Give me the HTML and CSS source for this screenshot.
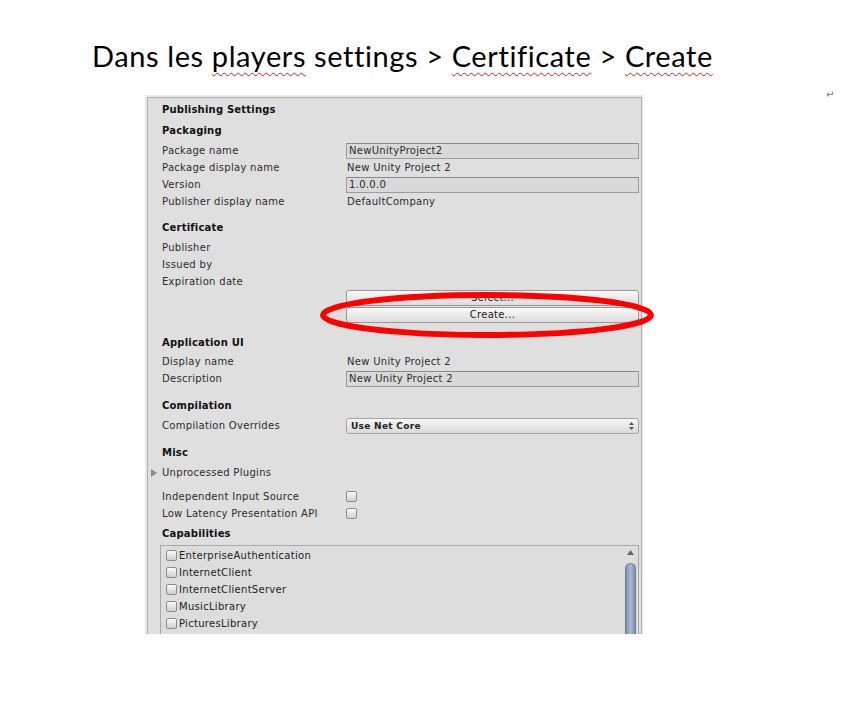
FILE: index.html
```html
<!DOCTYPE html>
<html lang="fr">
<head>
<meta charset="utf-8">
<link rel="stylesheet" href="styles.css">
</head>
<body>
<div class="page">
  <h1 class="title">Dans les <span class="sp">players</span> settings &gt; <span class="sp">Certificate</span> &gt; <span class="sp">Create</span></h1>
  <div class="figure-row">
    <div class="panel">
      <div class="inner">
        <div class="hdr h-top">Publishing Settings</div>
        <div class="hdr h-pack">Packaging</div>
        <div class="rows r-first">
          <div class="row"><span class="label">Package name</span><span class="field">NewUnityProject2</span></div>
          <div class="row"><span class="label">Package display name</span><span class="val">New Unity Project 2</span></div>
          <div class="row"><span class="label">Version</span><span class="field">1.0.0.0</span></div>
          <div class="row"><span class="label">Publisher display name</span><span class="val">DefaultCompany</span></div>
        </div>
        <div class="hdr h-cert">Certificate</div>
        <div class="rows r-first">
          <div class="row"><span class="label">Publisher</span></div>
          <div class="row"><span class="label">Issued by</span></div>
          <div class="row"><span class="label">Expiration date</span></div>
        </div>
        <div class="btn-row"><span class="label"></span><span class="btn">Select...</span></div>
        <div class="btn-row b2"><span class="label"></span>
          <span class="btn">Create...</span>
          <svg class="ellipse" width="340" height="52" viewBox="0 0 340 52"><ellipse cx="169" cy="26" rx="164" ry="20" fill="none" stroke="#ff0000" stroke-width="6"/></svg>
        </div>
        <div class="hdr h-app">Application UI</div>
        <div class="rows r-app">
          <div class="row"><span class="label">Display name</span><span class="val">New Unity Project 2</span></div>
          <div class="row"><span class="label">Description</span><span class="field">New Unity Project 2</span></div>
        </div>
        <div class="hdr h-sec">Compilation</div>
        <div class="rows r-first">
          <div class="row"><span class="label">Compilation Overrides</span><span class="dropdown"><span>Use Net Core</span><svg width="5" height="8" viewBox="0 0 5 8"><path d="M2.5 0 L5 3 L0 3 Z M2.5 8 L5 5 L0 5 Z" fill="#555"/></svg></span></div>
        </div>
        <div class="hdr h-sec">Misc</div>
        <div class="rows r-first">
          <div class="row fold"><span class="tri"></span><span class="label">Unprocessed Plugins</span></div>
        </div>
        <div class="rows r-chk">
          <div class="row"><span class="label">Independent Input Source</span><span class="chk"></span></div>
          <div class="row"><span class="label">Low Latency Presentation API</span><span class="chk"></span></div>
        </div>
        <div class="hdr h-cap">Capabilities</div>
        <div class="listbox">
          <div class="items">
            <div class="item"><span class="chk"></span>EnterpriseAuthentication</div>
            <div class="item"><span class="chk"></span>InternetClient</div>
            <div class="item"><span class="chk"></span>InternetClientServer</div>
            <div class="item"><span class="chk"></span>MusicLibrary</div>
            <div class="item"><span class="chk"></span>PicturesLibrary</div>
            <div class="item"><span class="chk"></span></div>
          </div>
          <div class="scroll">
            <svg class="up" width="7" height="5" viewBox="0 0 7 5"><path d="M3.5 0 L7 5 L0 5 Z" fill="#666"/></svg>
            <div class="thumb"></div>
          </div>
        </div>
      </div>
    </div>
    <span class="mark">↵</span>
  </div>
</div>
</body>
</html>
```

FILE: styles.css
```css
html, body {
  margin: 0;
  padding: 0;
  background: #ffffff;
}
.page {
  width: 853px;
  height: 708px;
  overflow: hidden;
}
.title {
  margin: 38px 0 0 92px;
  font-family: "Lato", "Carlito", sans-serif;
  font-weight: normal;
  font-size: 29px;
  letter-spacing: 0.6px;
  line-height: 36px;
  color: #000;
  white-space: nowrap;
}
.sp {
  text-decoration: underline wavy #e21b1b;
  text-decoration-thickness: 1px;
  text-underline-offset: 5px;
}
.figure-row {
  display: flex;
  align-items: flex-start;
  margin-top: 21px;
  margin-left: 145px;
}
.panel {
  width: 498px;
  height: 539px;
  box-sizing: border-box;
  padding: 2px 1px 0 2px;
  background: #e9e9e9;
  flex: none;
}
.inner {
  height: 100%;
  box-sizing: border-box;
  border: 1px solid #b0b0b0;
  border-bottom: none;
  background: #dfdfdf;
  padding: 0 2px 0 14px;
  font-family: "DejaVu Sans", Verdana, sans-serif;
  font-size: 10px;
  letter-spacing: 0.3px;
  color: #2c2c2c;
  display: flex;
  flex-direction: column;
}
.hdr {
  height: 16px;
  line-height: 16px;
  font-weight: bold;
  color: #111;
  letter-spacing: 0.2px;
  flex: none;
}
.h-top { margin-top: 4px; }
.h-pack { margin-top: 5px; }
.h-cert { margin-top: 10px; }
.h-app { margin-top: 12px; }
.h-sec { margin-top: 11px; }
.h-cap { margin-top: 4px; }
.rows { display: flex; flex-direction: column; flex: none; }
.r-first { margin-top: 3px; }
.r-app { margin-top: 2px; }
.r-chk { margin-top: 7px; }
.row {
  height: 17px;
  display: flex;
  align-items: center;
}
.label {
  width: 184px;
  flex: none;
}
.val { flex: 1; padding-left: 1px; }
.field {
  flex: 1;
  height: 16px;
  box-sizing: border-box;
  border: 1px solid #9c9c9c;
  border-top-color: #8a8a8a;
  background: #d9d9d9;
  line-height: 14px;
  padding-left: 2px;
}
.btn-row {
  display: flex;
  height: 16px;
  position: relative;
  flex: none;
}
.btn-row.b2 { margin-top: 1px; }
.btn {
  flex: 1;
  box-sizing: border-box;
  height: 16px;
  border: 1px solid #9a9a9a;
  border-radius: 3px;
  background: linear-gradient(#fafafa, #dcdcdc);
  text-align: center;
  line-height: 14px;
  color: #222;
}
.ellipse {
  position: absolute;
  left: 156px;
  top: -18px;
}
.dropdown {
  flex: 1;
  height: 16px;
  box-sizing: border-box;
  border: 1px solid #a3a3a3;
  border-radius: 3px;
  background: linear-gradient(#f7f7f7, #dadada);
  display: flex;
  align-items: center;
  justify-content: space-between;
  padding: 0 4px 0 4px;
  font-weight: bold;
  font-size: 9px;
  color: #222;
}
.fold { margin-left: -11px; }
.tri {
  width: 0;
  height: 0;
  border-left: 6px solid #8a8a8a;
  border-top: 4px solid transparent;
  border-bottom: 4px solid transparent;
  margin-right: 5px;
}
.chk {
  width: 11px;
  height: 11px;
  box-sizing: border-box;
  border: 1px solid #8c8c8c;
  border-radius: 2px;
  background: linear-gradient(#fbfbfb, #cfcfcf);
  flex: none;
}
.listbox {
  margin: 3px 0 0 -2px;
  flex: 1;
  min-height: 0;
  overflow: hidden;
  border: 1px solid #a8a8a8;
  border-bottom: none;
  background: #dddddd;
  display: flex;
}
.items {
  flex: 1;
  padding: 1px 0 0 5px;
  color: #222;
}
.item {
  height: 17px;
  display: flex;
  align-items: center;
  gap: 1px;
}
.item .chk { margin-right: 1px; }
.scroll {
  width: 13px;
  display: flex;
  flex-direction: column;
  align-items: center;
  padding-top: 4px;
  margin-right: 1px;
}
.up { flex: none; }
.thumb {
  margin-top: 8px;
  width: 11px;
  flex: 1;
  border-radius: 6px 6px 0 0;
  background: linear-gradient(90deg, #7d8fab, #a9b9d0 50%, #7d8fab);
  border: 1px solid #6f7f98;
  border-bottom: none;
  box-sizing: border-box;
}
.mark {
  margin-left: 183px;
  margin-top: -6px;
  font-family: "DejaVu Sans", sans-serif;
  font-size: 10px;
  color: #777;
}
```
